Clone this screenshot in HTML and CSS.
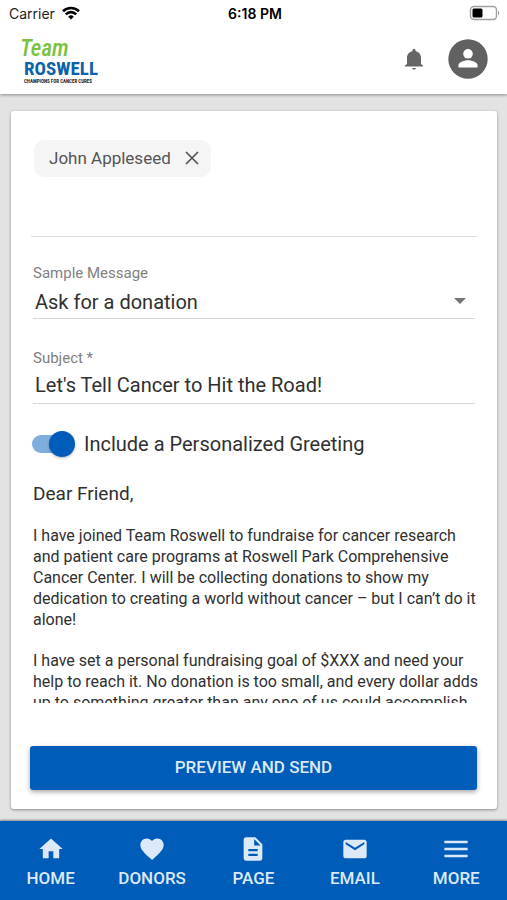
FILE: index.html
```html
<!DOCTYPE html>
<html lang="en">
<head>
<meta charset="utf-8">
<meta name="viewport" content="width=device-width, initial-scale=1">
<title>Team Roswell</title>
<link rel="stylesheet" href="styles.css">
</head>
<body>
<div class="app">
  <div class="status">
    <div class="carrier">Carrier
      <svg class="wifi" viewBox="0 0 18 14" fill="none" stroke="#000" stroke-width="2.6"><path d="M1 5.2a11.5 11.5 0 0 1 16 0"/><path d="M3.8 8.3a7.4 7.4 0 0 1 10.4 0"/><path d="M9 13.6 6.2 10.700a4 4 0 0 1 5.600 0z" fill="#000" stroke="none"/></svg>
    </div>
    <div class="time">6:18 PM</div>
    <svg class="battery" viewBox="0 0 32 16"><rect x="1.500" y="1.500" width="26" height="13" rx="3.500" fill="#fff" stroke="#a0a0a0" stroke-width="1.400"/><rect x="3.500" y="3.500" width="10" height="9" rx="1.500"/><path d="M29 5.500q2.500 2.500 0 5z" fill="#a0a0a0"/></svg>
  </div>
  <header class="header">
    <a class="logo" href="#">
      <span class="logo-team">Team</span>
      <span class="logo-name">ROSWELL</span>
      <span class="logo-tag">CHAMPIONS FOR CANCER CURES</span>
    </a>
    <div class="actions">
      <button class="icon-button" aria-label="Notifications">
        <svg class="bell" viewBox="0 0 24 24" fill="#666"><path d="M12 22.500c1.100 0 2-.7 2-1.500h-4c0 .8.9 1.500 2 1.500zM19 17v-6.500c0-3.300-2.500-5.800-5.500-6.600V3.200a1.500 1.500 0 0 0-3 0v.7c-3 .8-5.500 3.300-5.500 6.600V17L3 18.500v1h18v-1z"/></svg>
      </button>
      <button class="icon-button" aria-label="Account">
        <svg class="avatar" viewBox="0 0 40 40"><circle cx="20" cy="20" r="19.700" fill="#616161"/><circle cx="20" cy="14.800" r="4.800" fill="#fff"/><path d="M10.500 28.500v-2.300c0-3.200 6.300-4.900 9.500-4.900s9.500 1.700 9.500 4.900v2.300z" fill="#fff"/></svg>
      </button>
    </div>
  </header>

  <main class="main">
    <form class="card">
      <div class="recipients">
        <span class="chip">John Appleseed
          <button type="button" class="icon-button" aria-label="Remove John Appleseed"><svg class="close" viewBox="0 0 14 14" fill="none" stroke="#555" stroke-width="1.700"><path d="M1 1l12 12M13 1 1 13"/></svg></button>
        </span>
      </div>
      <div class="field">
        <label for="sample">Sample Message</label>
        <div class="select">
          <select id="sample"><option>Ask for a donation</option></select>
          <svg class="arrow" viewBox="0 0 12 6" fill="#757575"><path d="M0 0h12L6 6z"/></svg>
        </div>
      </div>
      <div class="field">
        <label for="subject">Subject *</label>
        <input id="subject" type="text" value="Let's Tell Cancer to Hit the Road!">
      </div>
      <label class="toggle"><input type="checkbox" role="switch" checked><span>Include a Personalized Greeting</span></label>
      <p class="greeting">Dear Friend,</p>
      <div class="message">
        <p>I have joined Team Roswell to fundraise for cancer research and patient care programs at Roswell Park Comprehensive Cancer Center. I will be collecting donations to show my dedication to creating a world without cancer – but I can’t do it alone!</p>
        <p>I have set a personal fundraising goal of $XXX and need your help to reach it. No donation is too small, and every dollar adds up to something greater than any one of us could accomplish</p>
      </div>
      <button type="button" class="send">PREVIEW AND SEND</button>
    </form>
  </main>

  <nav class="nav">
    <a href="#"><svg viewBox="0 0 24 24"><path d="M10 20v-6h4v6h5v-8h3L12 3 2 12h3v8z"/></svg>HOME</a>
    <a href="#"><svg viewBox="0 0 24 24"><path d="M12 21.350l-1.450-1.320C5.400 15.360 2 12.280 2 8.500 2 5.420 4.420 3 7.500 3c1.740 0 3.410.81 4.500 2.090C13.090 3.810 14.760 3 16.500 3 19.580 3 22 5.420 22 8.500c0 3.780-3.400 6.860-8.550 11.540z"/></svg>DONORS</a>
    <a href="#"><svg viewBox="0 0 24 24"><path d="M14 2H6c-1.100 0-2 .9-2 2v16c0 1.100.9 2 2 2h12c1.100 0 2-.9 2-2V8zm2 16H8v-2h8zm0-4H8v-2h8zm-3-5V3.500L18.500 9z"/></svg>PAGE</a>
    <a href="#"><svg viewBox="0 0 24 24"><path d="M20 4H4c-1.100 0-2 .9-2 2v12c0 1.100.9 2 2 2h16c1.100 0 2-.9 2-2V6c0-1.100-.9-2-2-2zm0 4l-8 5-8-5V6l8 5 8-5z"/></svg>EMAIL</a>
    <a href="#"><svg viewBox="0 0 24 24"><path d="M2 19h20v-2H2zm0-6h20v-2H2zm0-8v2h20V5z"/></svg>MORE</a>
  </nav>
</div>
</body>
</html>
```
FILE: styles.css
```css
* { box-sizing: border-box; }
body { margin: 0; font-family: Roboto, "Liberation Sans", sans-serif; color: #303030; background: #e3e3e3; }
p { margin: 0; }
button, input, select { font: inherit; color: inherit; }
svg { display: block; }

.app { display: flex; flex-direction: column; height: 100vh; min-height: 800px; }

.status { display: grid; grid-template-columns: 1fr auto 1fr; align-items: center; height: 28px; padding: 0 6px 2px 9px; background: #fff; font-family: Inter, sans-serif; font-size: 14px; color: #222; }
.carrier { display: flex; align-items: center; gap: 7px; }
.wifi { width: 18px; height: 14px; }
.time { font-weight: 600; color: #000; }
.battery { width: 32px; height: 16px; justify-self: end; }

.header { position: relative; display: flex; align-items: center; justify-content: space-between; height: 66px; padding: 0 19px 4px 20px; background: #fff; box-shadow: 0 1px 3px rgba(0, 0, 0, .4); clip-path: inset(0 0 -6px); }
.logo { display: flex; flex-direction: column; margin-top: 3px; text-decoration: none; white-space: nowrap; }
.logo-team { font-family: "Roboto Condensed", "Liberation Sans Narrow", Roboto, sans-serif; font-style: italic; font-weight: 500; font-size: 23px; line-height: 23px; color: #7cc142; }
.logo-name { padding-left: 4px; font-family: "Liberation Sans Narrow", "Roboto Condensed", Roboto, sans-serif; font-weight: 700; font-size: 19px; line-height: 18px; color: #0b62a8; }
.logo-tag { padding-left: 4px; font-family: "Roboto Condensed", Roboto, sans-serif; font-weight: 700; font-size: 5px; line-height: 6px; color: #222; }
.actions { display: flex; align-items: center; gap: 22px; }
.icon-button { padding: 0; border: 0; background: none; }
.bell { width: 24px; height: 24px; }
.avatar { width: 40px; height: 40px; }

.main { flex: 1; min-height: 0; display: flex; padding: 17px 10px 12px 11px; }
.card { flex: 1; min-width: 0; display: flex; flex-direction: column; padding: 20px; border-radius: 3px; background: #fff; box-shadow: 0 1px 3px rgba(0, 0, 0, .4); }

.recipients { flex: none; height: 106px; padding: 9px 3px; border-bottom: 1px solid #dcdcdc; }
.chip { display: inline-flex; align-items: center; gap: 14px; height: 37px; padding: 0 12px 2px 15px; border-radius: 10px; background: #f5f5f5; font-size: 17px; color: #555; }
.close { width: 14px; height: 14px; }

.field { margin: 24px 2px 0; border-bottom: 1px solid #d8d8d8; }
.field + .field { margin-top: 27px; }
.field label { display: block; font-size: 15px; line-height: 24px; color: #808080; }
.field input, .field select { display: block; width: 100%; height: 33px; padding: 0 2px; border: 0; outline: 0; border-radius: 0; background: none; appearance: none; font-size: 20px; }
.field input { padding-bottom: 4px; }
.select { position: relative; }
.arrow { position: absolute; right: 9px; top: 13px; width: 12px; height: 6px; pointer-events: none; }

.toggle { display: flex; align-items: center; gap: 10px; margin-top: 26px; font-size: 20px; line-height: 28px; }
.toggle input { position: relative; appearance: none; width: 42px; height: 18px; margin: 0 0 0 1px; border-radius: 9px; background: #7faedd; }
.toggle input::after { content: ""; position: absolute; right: -1px; top: -4px; width: 26px; height: 26px; border-radius: 50%; background: #005cb9; box-shadow: 0 1px 3px rgba(0, 0, 0, .3); }
.greeting { margin: 22px 2px 0; font-size: 19px; line-height: 28px; }
.message { flex: 1; min-height: 0; margin: 17px -8px 0 2px; overflow-y: auto; scrollbar-width: none; font-size: 16px; line-height: 21px; }
.message p + p { margin-top: 20px; }
.send { flex: none; height: 44px; margin: 43px 0 -1px -1px; padding: 0 0 2px; border: 0; border-radius: 3px; background: #005cb9; box-shadow: 0 2px 5px rgba(0, 0, 0, .35); color: #dbe9f8; font-size: 17px; font-weight: 500; }

.nav { display: grid; grid-template-columns: repeat(5, 1fr); height: 79px; padding-top: 14px; background: #005cb9; box-shadow: 0 -1px 2px rgba(0, 0, 0, .4); }
.nav a { display: flex; flex-direction: column; align-items: center; gap: 3px; color: #dbe9f8; text-decoration: none; font-size: 17px; line-height: 24px; font-weight: 500; }
.nav svg { width: 28px; height: 28px; fill: currentColor; }
```
